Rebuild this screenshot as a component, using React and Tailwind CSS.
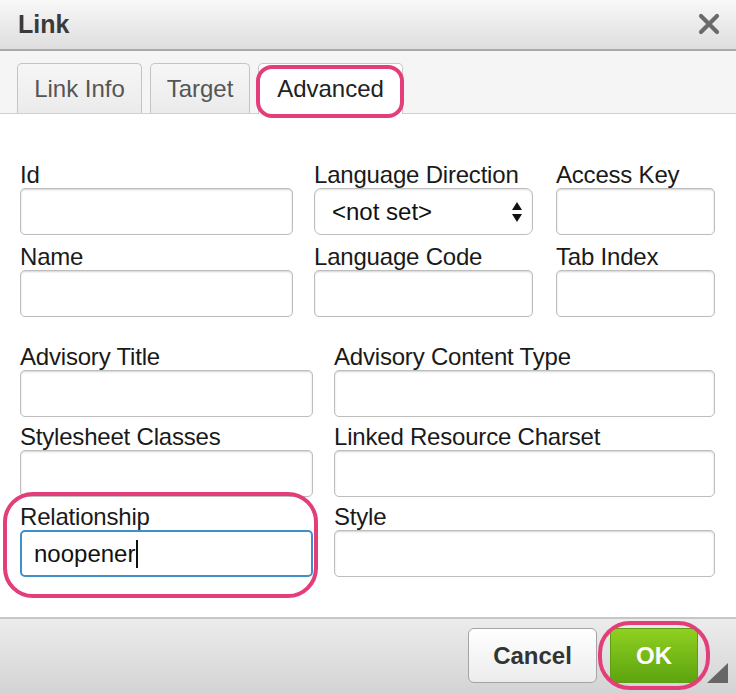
import React from "react";

const font = { fontFamily: '"Liberation Sans", Arial, sans-serif' };

const Ring = ({ className }) => (
  <span className={`pointer-events-none absolute border-[4px] border-[#e33d7a] ${className}`} />
);

const Field = ({ label, className = "", children }) => (
  <div className={`flex flex-col ${className}`}>
    <label className="h-[26px] text-[24px] leading-[26px] tracking-[-0.2px] text-[#1a1a1a]">{label}</label>
    {children || <div className="h-[47px] rounded-[5px] border border-[#bdbdbd] bg-white shadow-[inset_0_1px_2px_rgba(0,0,0,0.18)]" />}
  </div>
);

const Tab = ({ children, active, width }) => (
  <div
    className={`relative flex h-[50px] items-center justify-center rounded-t-[5px] border border-b-0 text-[24px] ${width} ${
      active
        ? "z-10 -mb-px h-[51px] border-[#c8c8c8] bg-white text-[#222]"
        : "border-[#c4c4c4] bg-gradient-to-b from-[#f6f6f6] to-[#ebebeb] text-[#555]"
    }`}
  >
    {children}
    {active && <Ring className="-left-[3px] -right-[2px] top-[1px] -bottom-[4px] rounded-[16px] border-[3px]" />}
  </div>
);

export default function App() {
  return (
    <div style={font} className="flex h-[694px] w-[736px] flex-col overflow-hidden bg-white">
      {/* title bar */}
      <div className="flex h-[51px] shrink-0 items-center justify-between border-b-2 border-[#a9a9a9] bg-gradient-to-b from-[#f8f8f8] to-[#dedede] pl-[18px] pr-[16px]">
        <h1 className="text-[25px] font-bold text-[#3a3a3a]">Link</h1>
        <svg width="22" height="22" viewBox="0 0 22 22" className="mb-[2px]">
          <path d="M3 3 L19 19 M19 3 L3 19" stroke="#6a6a6a" strokeWidth="4.2" strokeLinecap="round" />
        </svg>
      </div>

      {/* tabs */}
      <div className="flex h-[63px] shrink-0 items-end gap-[8px] border-b border-[#d0d0d0] bg-[#f5f5f5] pl-[17px]">
        <Tab width="w-[125px]">Link Info</Tab>
        <Tab width="w-[100px]">Target</Tab>
        <Tab width="w-[145px]" active>Advanced</Tab>
      </div>

      {/* content */}
      <div className="flex-1 px-[20px] pt-[48px]">
        <div className="flex flex-col gap-[9px]">
          <div className="flex gap-[21px]">
            <Field label="Id" className="w-[273px]" />
            <Field label="Language Direction" className="w-[219px]">
              <div className="flex h-[47px] items-center justify-between rounded-[7px] border border-[#bdbdbd] bg-white pl-[17px] pr-[9px] text-[24px] text-[#111] shadow-[inset_0_1px_2px_rgba(0,0,0,0.12)]">
                <span>&lt;not set&gt;</span>
                <svg width="12" height="22" viewBox="0 0 12 22">
                  <path d="M6 1 L11 9 L1 9 Z" fill="#111" />
                  <path d="M6 21 L11 13 L1 13 Z" fill="#111" />
                </svg>
              </div>
            </Field>
            <Field label="Access Key" className="ml-[2px] w-[159px]" />
          </div>
          <div className="flex gap-[21px]">
            <Field label="Name" className="w-[273px]" />
            <Field label="Language Code" className="w-[219px]" />
            <Field label="Tab Index" className="ml-[2px] w-[159px]" />
          </div>
        </div>

        <div className="mt-[27px] flex flex-col gap-[7px]">
          <div className="flex gap-[21px]">
            <Field label="Advisory Title" className="w-[293px]" />
            <Field label="Advisory Content Type" className="w-[381px]" />
          </div>
          <div className="flex gap-[21px]">
            <Field label="Stylesheet Classes" className="w-[293px]" />
            <Field label="Linked Resource Charset" className="w-[381px]" />
          </div>
          <div className="flex gap-[21px]">
            <div className="relative w-[293px]">
              <Field label="Relationship">
                <div className="flex h-[47px] items-center rounded-[5px] border-2 border-[#3f8fca] bg-white pl-[12px] text-[24px] text-[#111]">
                  <span>noopener</span>
                  <span className="ml-[1px] inline-block h-[28px] w-[2px] bg-[#111]" />
                </div>
              </Field>
              <Ring className="-left-[17px] -right-[5px] -top-[12px] -bottom-[21px] rounded-[30px]" />
            </div>
            <Field label="Style" className="w-[381px]" />
          </div>
        </div>
      </div>

      {/* footer */}
      <div className="relative flex h-[77px] shrink-0 items-start justify-end gap-[13px] border-t-2 border-[#c6c6c6] bg-gradient-to-b from-[#ececec] to-[#d3d3d3] pr-[38px] pt-[9px]">
        <button className="h-[55px] w-[129px] rounded-[6px] border border-[#a4a4a4] bg-gradient-to-b from-white to-[#ececec] text-[24px] font-bold text-[#333]">
          Cancel
        </button>
        <div className="relative">
          <button className="h-[55px] w-[88px] rounded-[4px] border border-[#5d9e12] bg-gradient-to-b from-[#8fd021] to-[#5da40f] text-[24px] font-bold text-white">
            OK
          </button>
          <Ring className="-left-[12px] -right-[12px] -top-[7px] -bottom-[7px] rounded-[32px]" />
        </div>
        <svg width="21" height="20" viewBox="0 0 21 20" className="absolute right-[8px] bottom-[11px]">
          <path d="M21 0 L21 20 L0 20 Z" fill="#666" />
        </svg>
      </div>
    </div>
  );
}
